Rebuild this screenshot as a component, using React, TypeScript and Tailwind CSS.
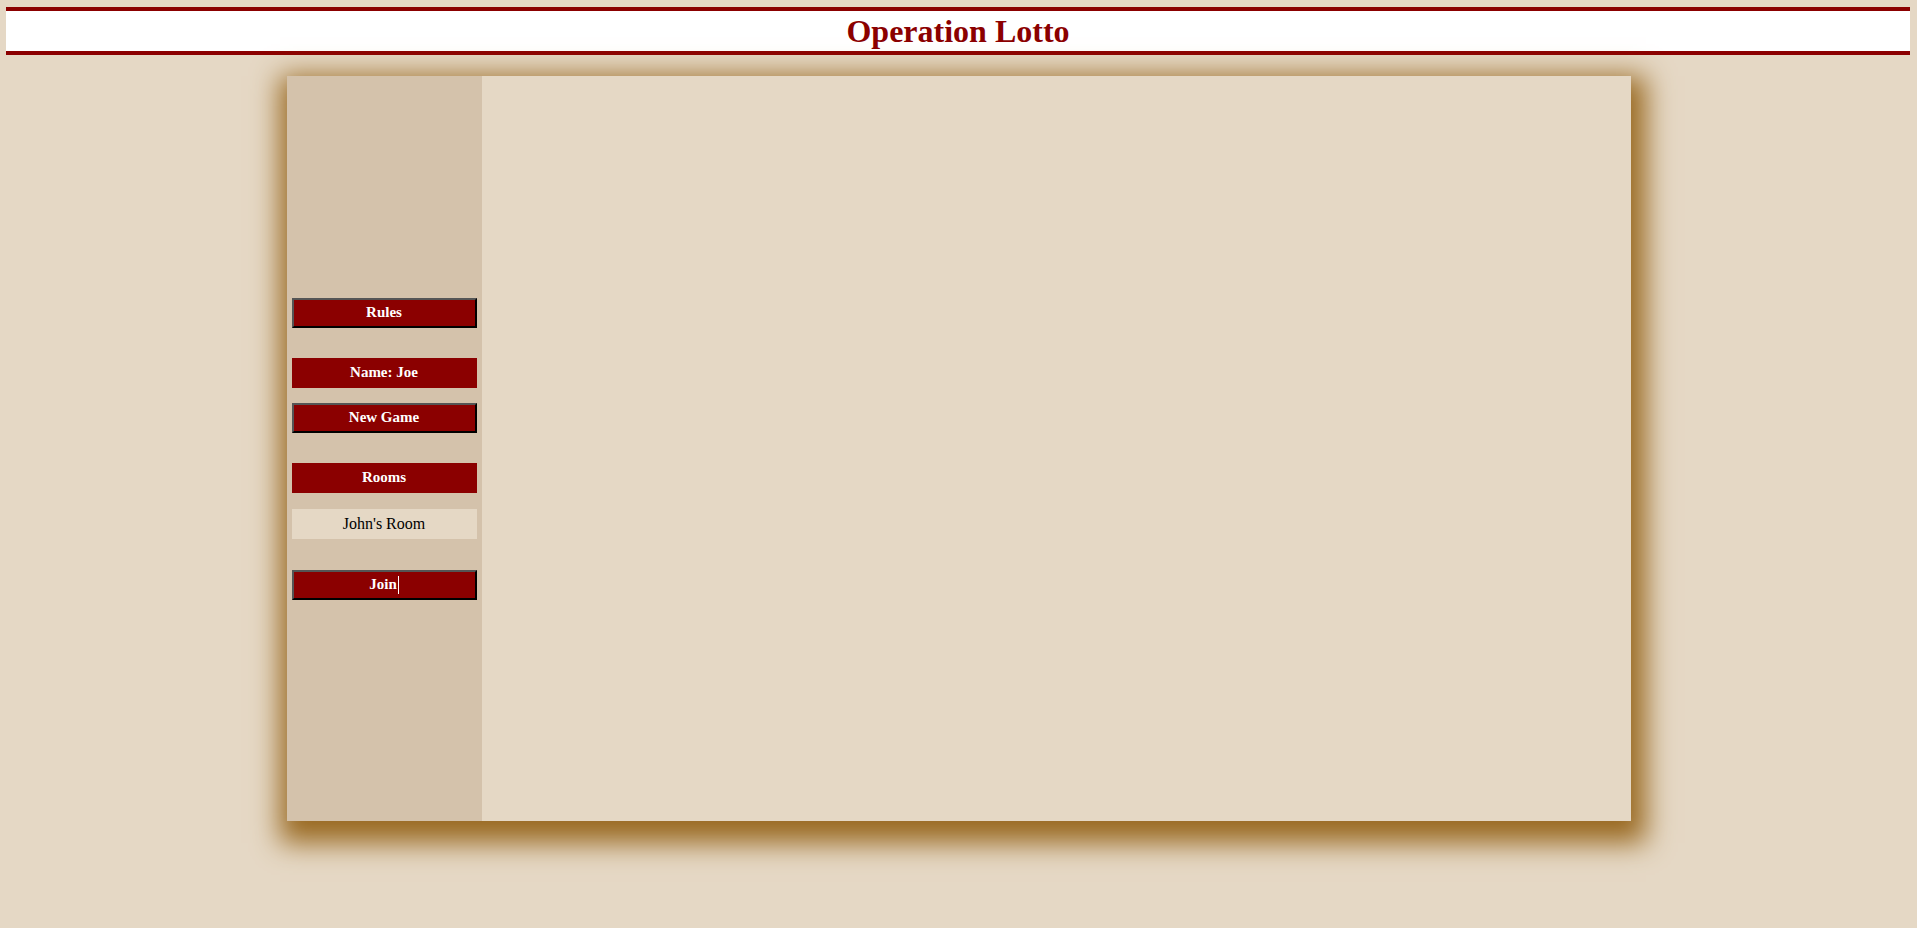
import React from "react";

const serif = { fontFamily: '"Liberation Serif", "Times New Roman", serif' };

function Btn({ children, className = "" }: { children: React.ReactNode; className?: string }) {
  return (
    <div
      className={`h-[30px] bg-[#8b0000] border-2 border-t-[#555555] border-l-[#555555] border-b-black border-r-black flex items-center justify-center text-white font-bold text-[15px] ${className}`}
    >
      {children}
    </div>
  );
}

export default function App() {
  return (
    <div className="min-h-screen w-full bg-[#e5d8c5] pt-[7px]" style={serif}>
      <header className="ml-[6px] mr-[7px] h-[48px] bg-white border-y-4 border-[#8b0000] flex items-center justify-center">
        <h1 className="text-[32px] font-bold text-[#8b0000] leading-none">Operation Lotto</h1>
      </header>
      <div className="mx-auto mt-[21px] w-[1344px] h-[745px] flex bg-[#e5d8c5] shadow-[4px_11px_26px_11px_#9a6a22]">
        <aside className="w-[195px] bg-[#d4c2ab] px-[5px] flex flex-col justify-center">
          <Btn>Rules</Btn>
          <div className="mt-[30px] h-[30px] bg-[#8b0000] flex items-center justify-center text-white font-bold text-[15px]">
            Name: Joe
          </div>
          <Btn className="mt-[15px]">New Game</Btn>
          <div className="mt-[30px] h-[30px] bg-[#8b0000] flex items-center justify-center text-white font-bold text-[15px]">
            Rooms
          </div>
          <div className="mt-[16px] h-[30px] bg-[#e5d8c5] flex items-center justify-center text-black text-[16px]">
            John's Room
          </div>
          <Btn className="mt-[31px]">
            <span>Join</span>
            <span className="inline-block w-px h-[18px] bg-white ml-px" />
          </Btn>
        </aside>
        <main className="flex-1 bg-[#e5d8c5]" />
      </div>
    </div>
  );
}
